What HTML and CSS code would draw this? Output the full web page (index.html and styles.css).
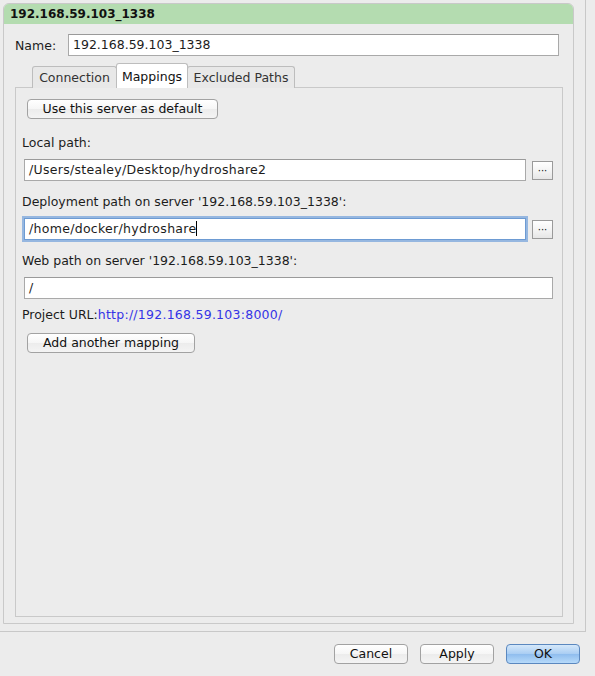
FILE: index.html
```html
<!DOCTYPE html>
<html>
<head>
<meta charset="utf-8">
<link rel="stylesheet" href="styles.css">
</head>
<body>
<div class="frame">
  <div class="card">
    <div class="card-head">192.168.59.103_1338</div>
    <div class="card-body">
      <div class="name-row">
        <span class="name-label">Name:</span>
        <div class="field name-field">192.168.59.103_1338</div>
      </div>
      <div class="tabs">
        <div class="tab tab-first">Connection</div>
        <div class="tab tab-active">Mappings</div>
        <div class="tab tab-last">Excluded Paths</div>
      </div>
      <div class="pane">
        <button class="btn btn-default">Use this server as default</button>
        <div class="label label-first">Local path:</div>
        <div class="field-row">
          <div class="field field-path">/Users/stealey/Desktop/hydroshare2</div>
          <button class="dots">···</button>
        </div>
        <div class="label">Deployment path on server '192.168.59.103_1338':</div>
        <div class="field-row">
          <div class="field field-path field-focus">/home/docker/hydroshare<span class="caret"></span></div>
          <button class="dots">···</button>
        </div>
        <div class="label">Web path on server '192.168.59.103_1338':</div>
        <div class="field-row">
          <div class="field field-wide">/</div>
        </div>
        <div class="label label-url">Project URL:<span class="link">http://192.168.59.103:8000/</span></div>
        <button class="btn btn-add">Add another mapping</button>
      </div>
    </div>
  </div>
</div>
<div class="actions">
  <button class="btn btn-action">Cancel</button>
  <button class="btn btn-action">Apply</button>
  <button class="btn btn-action btn-ok">OK</button>
</div>
</body>
</html>
```
FILE: styles.css
```css
html, body {
  margin: 0;
  padding: 0;
}
body {
  width: 595px;
  height: 676px;
  background: #ececec;
  font-family: "DejaVu Sans", "Liberation Sans", sans-serif;
  font-size: 12.5px;
  color: #1c1c1c;
  overflow: hidden;
}
.frame {
  box-sizing: border-box;
  width: 586px;
  height: 632px;
  padding: 3px 0 0 3px;
  border-right: 1px solid #c8c8c8;
  border-bottom: 1px solid #c8c8c8;
}
.card {
  box-sizing: border-box;
  width: 571px;
  height: 621px;
  border: 1px solid #c9c9c9;
  border-radius: 6px 6px 0 0;
  overflow: hidden;
}
.card-head {
  height: 20px;
  line-height: 20px;
  background: #b4dcb0;
  font-weight: bold;
  font-size: 12px;
  padding-left: 6px;
  color: #111;
}
.card-body {
  padding: 10px 0 0 11px;
}
.name-row {
  display: flex;
  align-items: center;
}
.name-label {
  width: 53px;
}
.field {
  box-sizing: border-box;
  height: 22px;
  line-height: 20px;
  background: #fff;
  border: 1px solid #a9a9a9;
  border-top-color: #9a9a9a;
  padding-left: 4px;
  white-space: nowrap;
}
.name-field {
  width: 491px;
}
.tabs {
  display: flex;
  align-items: flex-end;
  height: 24px;
  margin-top: 8px;
  padding-left: 17px;
  position: relative;
  z-index: 1;
  margin-bottom: -1px;
}
.tab {
  box-sizing: border-box;
  height: 22px;
  line-height: 21px;
  padding: 0 4px;
  background: #e8e8e8;
  border: 1px solid #bdbdbd;
  border-bottom: none;
  border-radius: 3px 3px 0 0;
  color: #333;
  margin-right: -1px;
  text-align: center;
}
.tab-first {
  width: 85px;
}
.tab-active {
  height: 25px;
  line-height: 25px;
  background: #fff;
  color: #111;
  width: 72px;
}
.tab-last {
  width: 108px;
}
.pane {
  box-sizing: border-box;
  width: 548px;
  height: 530px;
  border: 1px solid #c9c9c9;
  padding-top: 11px;
  padding-left: 0;
}
.btn {
  font-family: "DejaVu Sans", "Liberation Sans", sans-serif;
  font-size: 12.5px;
  color: #111;
  box-sizing: border-box;
  height: 20px;
  padding: 0;
  border: 1px solid #a2a2a2;
  border-radius: 4px;
  background: linear-gradient(#ffffff, #f6f6f6 50%, #ececec 51%, #f4f4f4);
  line-height: 18px;
  display: block;
}
.btn-default {
  width: 191px;
  margin-left: 11px;
}
.label {
  height: 16px;
  line-height: 16px;
  margin: 13px 0 8px 6px;
  white-space: nowrap;
}
.label-first {
  margin-top: 16px;
}
.label-url {
  margin-top: 8px;
  margin-bottom: 10px;
}
.link {
  color: #3434e6;
  letter-spacing: 0.25px;
}
.field-row {
  display: flex;
  align-items: center;
  margin-left: 8px;
}
.field-path {
  width: 502px;
  letter-spacing: 0.3px;
}
.field-focus {
  border: 1px solid #6d9bd3;
  box-shadow: 0 0 0 2px rgba(122, 166, 220, 0.75);
}
.caret {
  display: inline-block;
  width: 1px;
  height: 15px;
  background: #000;
  vertical-align: -3px;
}
.field-wide {
  width: 529px;
}
.dots {
  box-sizing: border-box;
  width: 21px;
  height: 19px;
  margin-left: 6px;
  padding: 0;
  border: 1px solid #9a9a9a;
  background: linear-gradient(#ffffff, #f3f3f3 55%, #e6e6e6);
  font-family: "DejaVu Sans", sans-serif;
  font-size: 10px;
  line-height: 15px;
  color: #111;
}
.btn-add {
  width: 168px;
  margin-left: 11px;
}
.actions {
  display: flex;
  justify-content: flex-end;
  gap: 12px;
  margin-top: 12px;
  padding-right: 15px;
}
.btn-action {
  width: 74px;
}
.btn-ok {
  border-color: #5b88bf;
  background: linear-gradient(#d5e8fa, #a9cdf3 50%, #8fbdee 51%, #b7dafa);
}
```
